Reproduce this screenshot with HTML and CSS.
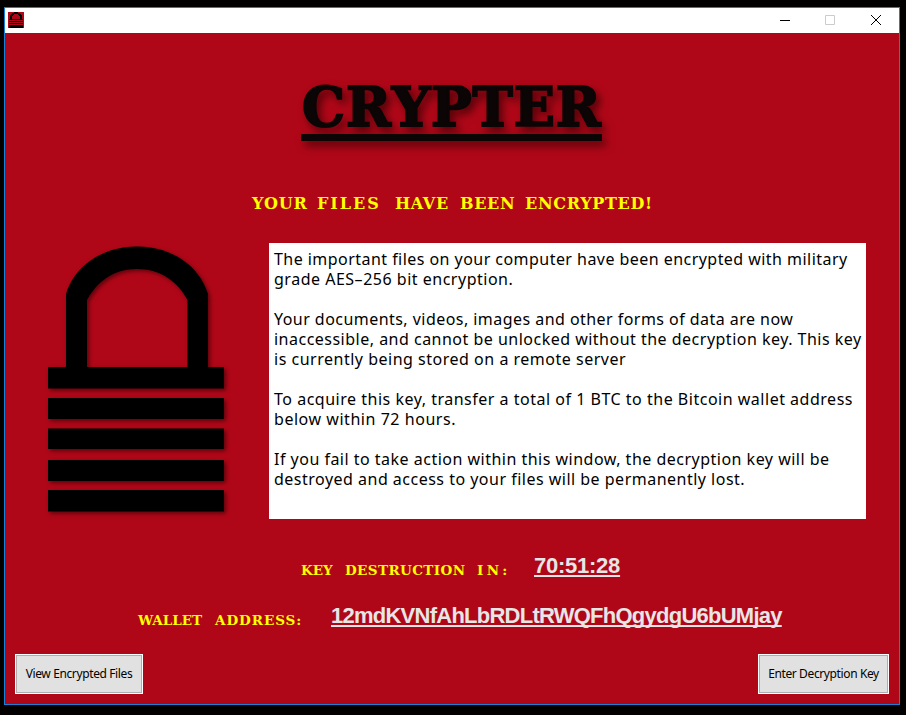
FILE: index.html
```
<!DOCTYPE html>
<html lang="en">
<head>
<meta charset="utf-8">
<title>Crypter</title>
<link rel="stylesheet" href="styles.css">
</head>
<body>
<div class="window">
  <header class="titlebar">
    <svg class="app-icon" width="16" height="16" viewBox="0 0 16 16" shape-rendering="crispEdges"><path fill="#b00718" d="M0 0h16v16H0z"/><path fill-rule="evenodd" d="M6 0h4v1h2v1h1v1h1v4h1v1H1V7h1V3h1V2h1V1h2zM6 2v1H5v1H4v3h8V4h-1V3h-1V2zM1 9h14v1H1zM1 11h14v1H1zM1 13h14v3H1z"/></svg>
    <svg class="controls" width="104" height="16" viewBox="0 0 104 16" fill="none"><path d="M0 8.500h10" stroke="#000"/><path d="M45.500 3.500h9v9h-9z" stroke="#ccc"/><path d="M91 3l10 10M101 3L91 13" stroke="#000"/></svg>
  </header>
  <main class="content">
    <h1 class="title">CRYPTER</h1>
    <h2 class="slab headline"><span class="n5">YOUR</span><span class="n6 files">FILES</span><span class="n5">HAVE</span><span class="n5">BEEN</span><span class="n10">ENCRYPTED!</span></h2>
    <section class="middle">
      <svg class="lock" width="190" height="280" viewBox="0 0 190 280"><path d="M8 127H26V54C34 27 61 6.500 97 6.500S160 27 168 54V127H184V148.500H8zM47 127H147.500V60C138 42 121 29 97 29S57 42 47 60zM8 158H184V179H8zM8 188.500H184V209H8zM8 220H184V241H8zM8 250H184V271.500H8z" fill-rule="evenodd"/></svg>
      <div class="message">
        <p><span class="a1">The important files on your computer have been encrypted with military</span><br><span class="a2">grade AES–256 bit encryption.</span></p>
        <p><span class="b1">Your documents, videos, images and other forms of data are now</span><br><span class="b2">inaccessible, and cannot be unlocked without the decryption key. This key</span><br><span class="b3">is currently being stored on a remote server</span></p>
        <p><span class="c1">To acquire this key, transfer a total of 1 BTC to the Bitcoin wallet address</span><br><span class="c2">below within 72 hours.</span></p>
        <p><span class="d1">If you fail to take action within this window, the decryption key will be</span><br><span class="d2">destroyed and access to your files will be permanently lost.</span></p>
      </div>
    </section>
    <div class="row countdown"><span class="slab label"><span class="n4">KEY</span><span class="n12 destruction">DESTRUCTION</span><span class="n3 in">IN:</span></span><span class="value">70:51:28</span></div>
    <div class="row wallet"><span class="slab label"><span class="n7">WALLET</span><span class="n8 address">ADDRESS:</span></span><span class="value">12mdKVNfAhLbRDLtRWQFhQgydgU6bUMjay</span></div>
    <footer class="actions"><button class="view">View Encrypted Files</button><button class="enter">Enter Decryption Key</button></footer>
  </main>
</div>
</body>
</html>
```
FILE: styles.css
```
* { box-sizing: border-box; }
body { margin: 0; padding: 7px 6px 10px 4px; background: #030000; }
.window { width: 896px; height: 698px; border: 1px solid #1683d8; background: #b00718; font-family: "Liberation Sans", sans-serif; }
.titlebar { height: 25px; background: #fff; display: flex; justify-content: space-between; align-items: flex-start; padding: 4px 15px 0 3px; }
.titlebar svg { display: block; }
.content { display: flex; flex-direction: column; height: 671px; }
.title { margin: 47px 0 0 296px; padding-left: 1px; width: 301px; height: 61px; border-bottom: 7px solid #0c0505; color: #0c0505; font: bold 54px/55px "DejaVu Serif", serif; font-kerning: none; letter-spacing: .9px; -webkit-text-stroke: 2px #0c0505; stroke-linejoin: round; white-space: nowrap; filter: drop-shadow(4px 5px 4px rgba(35,0,0,.65)); }
.slab { font-family: "DejaVu Serif", serif; font-weight: bold; color: #ff0; white-space: nowrap; display: flex; }
.headline { --pitch: 13px; margin: 51px 0 0 247px; height: 24px; font-size: 16px; line-height: 24px; letter-spacing: .7px; }
.label { --pitch: 11px; font-size: 13.5px; line-height: 20px; }
.n3 { width: calc(3 * var(--pitch)); }
.n4 { width: calc(4 * var(--pitch)); }
.n5 { width: calc(5 * var(--pitch)); }
.n6 { width: calc(6 * var(--pitch)); }
.n7 { width: calc(7 * var(--pitch)); }
.n8 { width: calc(8 * var(--pitch)); }
.n10 { width: calc(10 * var(--pitch)); }
.n12 { width: calc(12 * var(--pitch)); }
.files { letter-spacing: 2px; }
.destruction { letter-spacing: .4px; }
.in { letter-spacing: 3.5px; }
.address { letter-spacing: .95px; }
.middle { display: flex; margin: 26px 0 0 35px; height: 281px; gap: 39px; }
.lock { margin-top: -2px; filter: drop-shadow(2px 2px 2px rgba(35,0,0,.6)); }
.message { width: 597px; height: 276px; margin-top: 1px; padding: 6px 5px; background: #fff; color: #000; font: 16px/20px "Noto Sans", sans-serif; white-space: nowrap; }
.message p { margin: 0 0 20px; }
.a1, .b1 { letter-spacing: .455px; }
.a2, .b3, .c1 { letter-spacing: .51px; }
.b2, .d1, .d2 { letter-spacing: .49px; }
.c2 { letter-spacing: .54px; }
.row { display: flex; align-items: center; height: 30px; }
.countdown { margin: 28px 0 0 296px; }
.countdown .label { width: 233px; padding-top: 8px; }
.countdown .value { letter-spacing: -.25px; }
.wallet { margin: 20px 0 0 133px; }
.wallet .label { width: 193px; padding-top: 8px; }
.wallet .value { letter-spacing: -.75px; }
.value { font-size: 22px; line-height: 22px; font-weight: bold; color: #e6e6e6; text-decoration: underline; text-decoration-thickness: 2px; text-underline-offset: 2px; text-decoration-skip-ink: none; }
.actions { display: flex; justify-content: space-between; margin: 23px 10px 0; }
button { height: 40px; padding: 0 0 1px; border: 1px solid #fff; outline: 1px solid #adadad; outline-offset: -2px; border-radius: 0; background: #e1e1e1; color: #000; font: 12px "Noto Sans", sans-serif; letter-spacing: -.38px; white-space: nowrap; }
.view { width: 128px; }
.enter { width: 131px; }
```
